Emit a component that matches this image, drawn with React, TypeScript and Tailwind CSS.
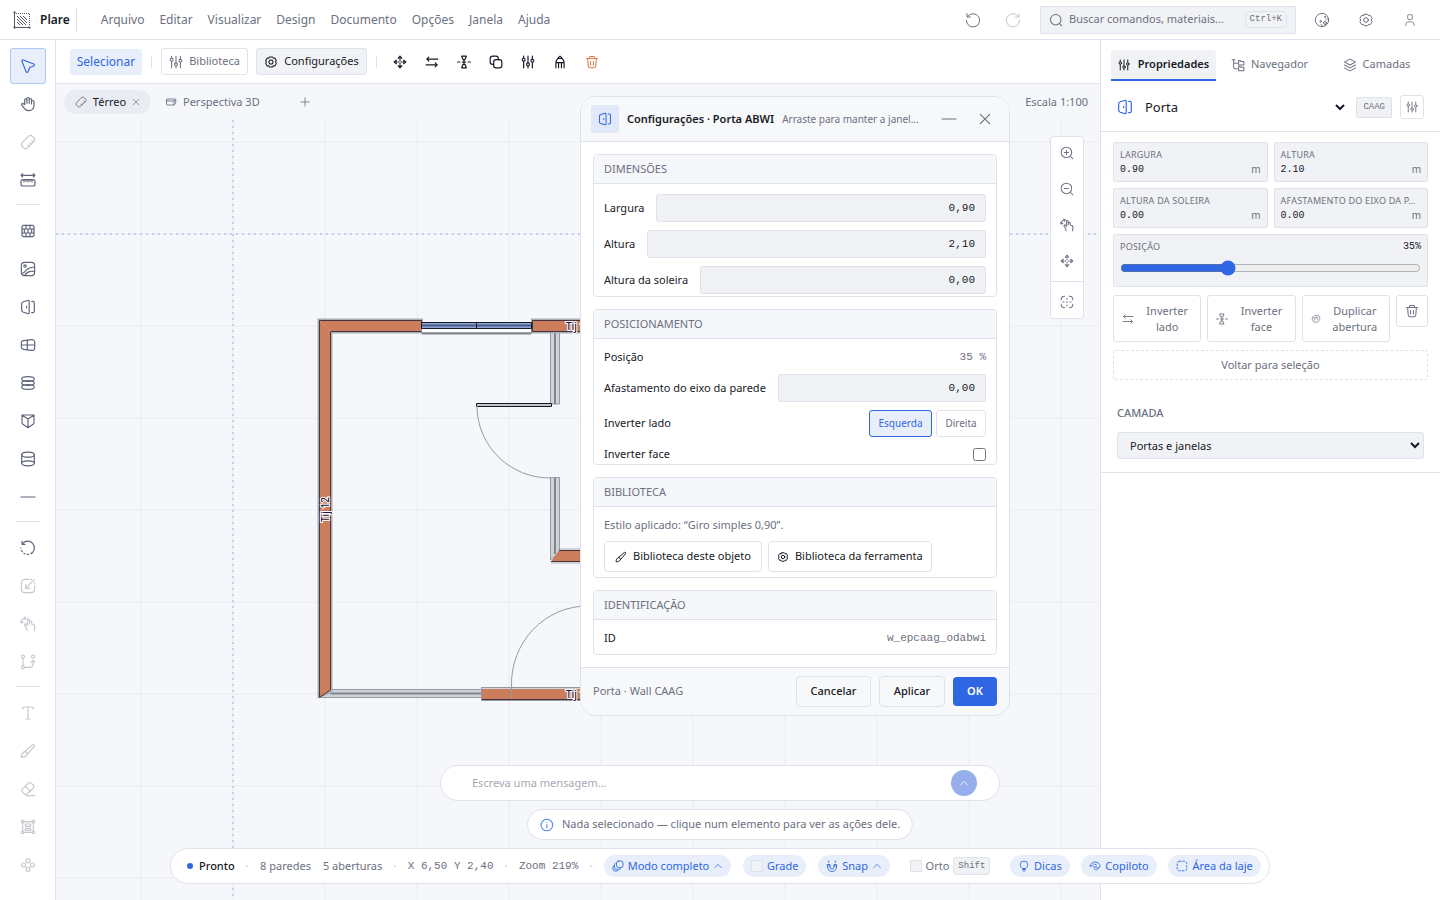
import { useState } from 'react';
import type { ReactNode } from 'react';

const ICONS: Record<string, ReactNode> = {
  cursor: <path d="M3 5c-.5-1.300.7-2.500 2-2l15.500 6c1.400.6 1.400 2.400 0 3l-6 2.200-2.500 6.300c-.6 1.400-2.500 1.300-3-.1z" />,
  hand: (
    <>
      <path d="M7 13V6a1.700 1.700 0 0 1 3.400 0v5V4a1.700 1.700 0 0 1 3.400 0v7-5.500a1.700 1.700 0 0 1 3.500 0V12 8.600a1.800 1.800 0 0 1 3.700 0V14c0 4.600-3 8-7.500 8-3.500 0-5.500-1-7.300-3.800l-3.400-4.600C1.500 12 3.600 10.400 5 11.700z" />
    </>
  ),
  ruler: (
    <>
      <path d="M13 3.200a3.800 3.800 0 0 1 5.400 0l2.400 2.400a3.800 3.800 0 0 1 0 5.400L11 20.800a3.800 3.800 0 0 1-5.400 0l-2.400-2.400a3.800 3.800 0 0 1 0-5.400z" />
      <path d="m19.500 12-2-2M16.500 15.200l-1.500-1.500M13.300 18.200l-2-2" />
    </>
  ),
  measure: (
    <>
      <path d="M1.500 5h21M4 2.500 1.500 5 4 7.500M20 2.500 22.500 5 20 7.500" />
      <rect x="1.500" y="11.500" width="21" height="9.500" rx="3" />
      <path d="M6 12v3M9 12v2M12 12v3M15 12v2M18 12v3" />
    </>
  ),
  wall: (
    <>
      <rect x="3" y="3.500" width="18" height="17" rx="2.500" />
      <path d="M3 9h18M3 15h18M9 3.500V9M15 3.500V9M6.500 9v6M12 9v6M17.500 9v6M9 15v5.500M15 15v5.500" />
    </>
  ),
  image: (
    <>
      <rect x="2" y="2" width="20" height="20" rx="5" />
      <circle cx="7.500" cy="7.500" r="1.800" />
      <path d="M3 18.500c3.500 0 4.500-3 7-5.500s6-3.500 11-4M7 21.500c2-3 5-5.500 8.500-6s4.500 0 6 .5" />
    </>
  ),
  door: (
    <>
      <path d="m5 4.200 6.500-2c1.300-.4 2.300.3 2.300 1.600v16.400c0 1.300-1 2-2.300 1.600l-6.500-2c-1.500-.5-2.500-1.200-2.500-2.800V7c0-1.600 1-2.300 2.500-2.800zM10 11v2" />
      <path d="M17.500 3.500H19c1.500 0 2.500 1 2.500 2.500v12c0 1.500-1 2.500-2.500 2.500h-1.500" />
    </>
  ),
  window: (
    <>
      <path d="M5 5.500 18 4c2-.2 4 1 4 3v10c0 2-2 3.200-4 3L5 18.500c-2-.2-3-1.200-3-3v-7c0-1.800 1-2.800 3-3zM2 12h20M11 4.800v14.400" />
    </>
  ),
  slabs: (
    <>
      <ellipse cx="12" cy="6" rx="9.500" ry="3.500" />
      <ellipse cx="12" cy="12" rx="9.500" ry="3.500" />
      <ellipse cx="12" cy="18" rx="9.500" ry="3.500" />
    </>
  ),
  roof: <path d="M3 3v11.500c0 1.200.4 1.900 1.400 2.500L12 22l7.600-5c1-.6 1.400-1.300 1.400-2.500V3zM3 3l9 6 9-6M12 9v13" />,
  cylinder: (
    <>
      <ellipse cx="12" cy="5.500" rx="9.500" ry="3.800" />
      <path d="M2.500 5.500v13M21.500 5.500v13" />
      <ellipse cx="12" cy="18.500" rx="9.500" ry="3.800" />
    </>
  ),
  minus: <path d="M1.500 12h21" />,
  rotate: (
    <>
      <path d="M3.500 6C7 .5 15 .5 19 5c4 5 3 11-1 14.500" />
      <path d="M3 2v4.500h4.500" />
      <path d="M18 19.500C12 24 2 21.500 1.500 12" strokeDasharray="2 3.500" />
    </>
  ),
  scale: (
    <>
      <path d="M13 2H8C4.200 2 2 4.200 2 8v8c0 3.800 2.200 6 6 6h8c3.800 0 6-2.200 6-6v-4" />
      <path d="M21.500 2.500 8.500 15.500M8.500 9.500v6h6M16 2h1.500M22 7v2" />
    </>
  ),
  gesture: (
    <>
      <path d="M9.500 18 7 14c-.9-1.700 1-3 2.200-1.500L11 14.500V6c0-2.200 3-2.200 3 0v6c0-2.500 0-4.500 2-4.500s1.600 2 1.600 4.500l1.400.3c2.200.4 3.500 1.700 3.200 4L21.500 22M10.500 22l-1-4" />
      <path d="M2 10c0-4 2-6 6-7M6 1.500 9 2.800 7.500 5.500M.8 7.500 2 10.500l2.800-1.500" />
    </>
  ),
  nodes: (
    <>
      <circle cx="4.500" cy="4" r="2.200" />
      <circle cx="4.500" cy="20" r="2.200" />
      <circle cx="19.500" cy="4" r="2.200" />
      <path d="M4.500 6.500v11M7 20h8c3 0 4.500-1.500 4.500-4.500V10M16.500 12.500l3-3 3 3" />
    </>
  ),
  text: <path d="M4 6.500V5c0-1.200.7-2 2-2h12c1.300 0 2 .8 2 2v1.500M12 3v18M9 21h6" />,
  brush: (
    <>
      <path d="M7 13 18.500 3c1.800-1.400 4 .8 2.500 2.500L11 17" />
      <path d="M7 13c2.500 0 4 1.500 4 4-1.500 3.500-5 4.500-9 4.500C2.300 18 4 14 7 13z" />
    </>
  ),
  eraser: (
    <>
      <path d="m12.500 3.200-9 8.900a3 3 0 0 0 0 4.200l3 3a3 3 0 0 0 4.200 0l9.300-8.800a3 3 0 0 0 0-4.200l-3-3a3 3 0 0 0-4.500-.1zM8 8l8 8M10 22h12" />
    </>
  ),
  group: (
    <>
      <circle cx="3.800" cy="4" r="2" />
      <circle cx="20.200" cy="4" r="2" />
      <circle cx="3.800" cy="20" r="2" />
      <circle cx="20.200" cy="20" r="2" />
      <path d="M6 4h12M6 20h12M4 6v12M20 6v12M8 7.500h8v3.500H8zM8 14h8v3H8z" />
    </>
  ),
  clover: (
    <>
      <circle cx="12" cy="5.500" r="3" />
      <circle cx="12" cy="18.500" r="3" />
      <circle cx="5.500" cy="12" r="3" />
      <circle cx="18.500" cy="12" r="3" />
    </>
  ),
  undo: <path d="M4 6.500A10 10 0 1 1 2 12.500M3 2.500v5h5" />,
  redo: <path d="M20 6.500A10 10 0 1 0 22 12.500M21 2.500v5h-5" />,
  search: (
    <>
      <circle cx="11.500" cy="11.500" r="9" />
      <path d="m18.500 18.500 3.500 3.500" />
    </>
  ),
  palette: (
    <>
      <circle cx="12" cy="12" r="10" />
      <circle cx="16.500" cy="7.500" r=".8" />
      <circle cx="10" cy="14" r="1.200" />
      <circle cx="16.500" cy="16.500" r="2.200" />
      <path d="M21.500 10c-2 0-3.500.5-3.500 2M12.500 22c0-2-.5-3-2-3.500" />
    </>
  ),
  gear: (
    <>
      <path d="M9.300 3.500h5.400l1.300 2 2.600-.3 2.600 4.500-1.500 2.300 1.500 2.300-2.600 4.500-2.600-.3-1.300 2H9.300l-1.300-2-2.600.3-2.600-4.500L4.300 12 2.800 9.700l2.600-4.500 2.600.3z" />
      <circle cx="12" cy="12" r="3.500" />
    </>
  ),
  user: (
    <>
      <circle cx="12" cy="7" r="4.500" />
      <path d="M5 22v-2.500C5 16.500 7.500 15 12 15s7 1.500 7 4.500V22" />
    </>
  ),
  sliders: (
    <>
      <path d="M4.500 2v3M4.500 11v11M12 2v11M12 19v3M19.500 2v5M19.500 13v9" />
      <circle cx="4.500" cy="8" r="2.500" />
      <circle cx="12" cy="16" r="2.500" />
      <circle cx="19.500" cy="10" r="2.500" />
    </>
  ),
  move: (
    <>
      <path d="m9 5.500 3-3.500 3 3.500zM9 18.500l3 3.500 3-3.500zM5.500 9 2 12l3.500 3zM18.500 9l3.500 3-3.500 3zM12 8v2M12 14v2M8 12h2M14 12h2" />
    </>
  ),
  swap: <path d="M22 7H3M6.500 3.500 3 7l3.500 3.500M2 17h19M17.500 13.500 21 17l-3.500 3.500" />,
  flip: (
    <>
      <path d="M8 2h8l-2.500 6h-3zM8 22h8l-2.500-6h-3zM1 12h4M19 12h4M9 12h6M12 9v6" />
    </>
  ),
  copy: (
    <>
      <rect x="8" y="8" width="14" height="14" rx="4" />
      <path d="M16 8V6.500C16 3.500 14.500 2 12 2H6.500C3.500 2 2 3.500 2 6.500V12c0 2.500 1.500 4 4 4h2" />
    </>
  ),
  pencilUp: <path d="M5 22v-9c0-3 4-9 7-11 3 2 7 8 7 11v9M5 13h14M9.500 13v9M14.500 13v9M9 6h6" />,
  trash: (
    <>
      <path d="M2.500 6h19M7 6l1.500-3.500h7L17 6M4.500 6l1 13c.1 1.700 1 2.700 2.700 2.700h7.600c1.700 0 2.600-1 2.700-2.700l1-13M9.500 11v6M14.500 11v6" />
    </>
  ),
  perspective: (
    <>
      <path d="M4.500 6H20c1 0 1.500.6 1.500 1.500V14L18 18H4.500C3.500 18 3 17.500 3 16.500V9zM3 10h15v8M18 10l3.500-3.500" />
    </>
  ),
  plus: <path d="M12 2v20M2 12h20" />,
  close: <path d="m4 4 16 16M20 4 4 20" />,
  tree: (
    <>
      <path d="M2 3h5M4.500 3v13c0 1.700.8 2.500 2.500 2.500h4M4.500 9H11" />
      <path d="M13 4.500h3l1 1.500h5v6h-9zM13 14.500h3l1 1.500h5v6h-9z" />
    </>
  ),
  layers: (
    <>
      <path d="M12 2 2.500 7 12 12l9.500-5zM2.500 12l9.500 5 9.500-5M2.500 17l9.500 5 9.500-5" />
    </>
  ),
  zoomIn: (
    <>
      <circle cx="11" cy="11" r="9" />
      <path d="m18 18 4 4M11 7.500v7M7.500 11h7" />
    </>
  ),
  zoomOut: (
    <>
      <circle cx="11" cy="11" r="9" />
      <path d="m18 18 4 4M7.500 11h7" />
    </>
  ),
  fit: (
    <>
      <path d="M2 8c0-4 2-6 6-6M16 2c4 0 6 2 6 6M22 16c0 4-2 6-6 6M8 22c-4 0-6-2-6-6M12 5v2M12 17v2M5 12h2M17 12h2M12 11v2" />
    </>
  ),
  duplicate: (
    <>
      <path d="M4 9c2-5 6-6.500 9-5 3-2.500 7-1 7 3 2.500 3 1 6-1 7 0 4-3 6-6 5-4 3-8 1-8-3-2.500-1.500-2.500-5-1-7z" />
      <path d="M9 15V9l6-2v6" />
    </>
  ),
  chevronUp: <path d="m4 16 8-8 8 8" />,
  info: (
    <>
      <circle cx="12" cy="12" r="10" />
      <path d="M12 11v6M12 7.200v.3" />
    </>
  ),
  stack: (
    <>
      <rect x="9" y="2" width="13" height="13" rx="4" />
      <path d="M6.500 6a4 4 0 0 0-1.500 3.500v5a4 4 0 0 0 4 4h5a4 4 0 0 0 3.500-1.500M4 11a4 4 0 0 0-2 3v4a4 4 0 0 0 4 4h4a4 4 0 0 0 3-2" />
    </>
  ),
  magnet: (
    <>
      <path d="M3 9h5v5a4 4 0 0 0 8 0V9h5v5a9 9 0 0 1-18 0zM5.500 2v3M18.500 2v3M3 12h5M16 12h5" />
    </>
  ),
  bulb: <path d="M8.500 16.500C6 15 4.500 12.500 4.500 9.500a7.500 7.500 0 0 1 15 0c0 3-1.500 5.500-4 7zM9 19h6M10.500 22h3" />,
  copilot: (
    <>
      <path d="M2 12c2-5 5-8 10-8 6 0 10 4 10 8s-3 5-5 4l-3-2M2 12c3 1 5 0 6-2M14 14c-3 1-5 0-6-2M10 17c2 4 7 4 9-1M11 8l4 2" />
    </>
  ),
  area: <rect x="2.500" y="2.500" width="19" height="19" rx="4" strokeDasharray="3.500 3.500" />,
};

function Icon({ name, className = 'size-4', weight = 1.75 }: { name: string; className?: string; weight?: number }) {
  return (
    <svg
      viewBox="0 0 24 24"
      fill="none"
      stroke="currentColor"
      strokeWidth={weight}
      strokeLinecap="round"
      strokeLinejoin="round"
      className={`shrink-0 ${className}`}
      aria-hidden="true"
    >
      {ICONS[name]}
    </svg>
  );
}

const MENUS = ['Arquivo', 'Editar', 'Visualizar', 'Design', 'Documento', 'Opções', 'Janela', 'Ajuda'];

function Header() {
  return (
    <header className="flex h-10 shrink-0 items-center border-b border-[#dfe2ea] bg-white pl-3 pr-2">
      <svg viewBox="0 0 20 20" className="size-5 text-[#555a6b]" fill="none" stroke="currentColor" aria-hidden="true">
        <path d="M2.500 2v15.500H18" />
        <path d="M4 3.500h13.500M17.500 4v12" strokeDasharray="1 1" />
        <path d="m5 6 9 9M5 9l6 6M8 6l7 7M11 6l4 4M5 12l3 3" />
        <path d="M1.500 1.500h2v2h-2zM1.500 16.500h2v2h-2zM16.500 16.500h2v2h-2z" fill="currentColor" stroke="none" />
      </svg>
      <span className="ml-2 text-[12px] font-semibold">Plare</span>
      <span className="ml-1.5 h-6 w-px bg-[#dfe2ea]" />
      <nav className="ml-6 flex gap-[15px] text-[12px] text-[#6c7080]">
        {MENUS.map((menu) => (
          <button key={menu}>{menu}</button>
        ))}
      </nav>
      <div className="ml-auto flex items-center text-[#6c7080]">
        <button aria-label="Desfazer" className="grid w-10 place-items-center">
          <Icon name="undo" weight={1.5} />
        </button>
        <button aria-label="Refazer" className="grid w-10 place-items-center opacity-40">
          <Icon name="redo" weight={1.5} />
        </button>
        <button className="ml-[7px] mr-1 flex h-7 w-64 items-center gap-1.5 border border-[#dfe2ea] bg-[#f1f2f6] px-2 text-[11px]">
          <Icon name="search" className="size-3.5" />
          <span className="whitespace-nowrap">Buscar comandos, materiais...</span>
          <kbd className="ml-auto rounded border border-[#dfe2ea] px-1 font-[Liberation_Mono,monospace] text-[9px] leading-[15px]">Ctrl+K</kbd>
        </button>
        <button aria-label="Tema" className="grid w-11 place-items-center">
          <Icon name="palette" weight={1.5} />
        </button>
        <button aria-label="Preferências" className="grid w-11 place-items-center">
          <Icon name="gear" weight={1.5} />
        </button>
        <button aria-label="Conta" className="grid w-11 place-items-center opacity-70">
          <Icon name="user" className="size-3.5" />
        </button>
      </div>
    </header>
  );
}

const TOOLS = [
  [
    { icon: 'cursor', label: 'Selecionar' },
    { icon: 'hand', label: 'Mover vista' },
    { icon: 'ruler', label: 'Régua', off: true },
    { icon: 'measure', label: 'Medir' },
  ],
  [
    { icon: 'wall', label: 'Parede' },
    { icon: 'image', label: 'Imagem' },
    { icon: 'door', label: 'Porta' },
    { icon: 'window', label: 'Janela' },
    { icon: 'slabs', label: 'Laje' },
    { icon: 'roof', label: 'Telhado' },
    { icon: 'cylinder', label: 'Pilar' },
    { icon: 'minus', label: 'Linha' },
  ],
  [
    { icon: 'rotate', label: 'Girar' },
    { icon: 'scale', label: 'Escalar', off: true },
    { icon: 'gesture', label: 'Arrastar', off: true },
    { icon: 'nodes', label: 'Editar nós', off: true },
  ],
  [
    { icon: 'text', label: 'Texto', off: true },
    { icon: 'brush', label: 'Pintar', off: true },
    { icon: 'eraser', label: 'Apagar', off: true },
    { icon: 'group', label: 'Agrupar', off: true },
    { icon: 'clover', label: 'Matriz', off: true },
  ],
];

function ToolRail() {
  return (
    <aside className="flex w-14 shrink-0 flex-col items-center gap-[6px] border-r border-[#dfe2ea] bg-white pt-2 text-[#5f6479]">
      {TOOLS.map((group, i) => (
        <div key={i} className="flex flex-col items-center gap-[2px]">
          {i > 0 && <span className="mb-1.5 h-px w-6 bg-[#dfe2ea]" />}
          {group.map((tool) => (
            <button
              key={tool.icon}
              aria-label={tool.label}
              className={
                tool.icon === 'cursor'
                  ? 'grid size-9 place-items-center rounded-[3px] border border-[#adc8f6] bg-[#e8effb] text-[#2f66e4]'
                  : tool.off
                    ? 'grid size-9 place-items-center opacity-35'
                    : 'grid size-9 place-items-center'
              }
            >
              <Icon name={tool.icon} />
            </button>
          ))}
        </div>
      ))}
    </aside>
  );
}

const ACTIONS = [
  { icon: 'move', label: 'Mover' },
  { icon: 'swap', label: 'Inverter lado' },
  { icon: 'flip', label: 'Inverter face' },
  { icon: 'copy', label: 'Duplicar' },
  { icon: 'sliders', label: 'Ajustar' },
  { icon: 'pencilUp', label: 'Editar' },
];

function Toolbar() {
  return (
    <div className="flex h-11 shrink-0 items-center gap-2 border-b border-[#dfe2ea] bg-white px-3.5 text-[11px]">
      <button className="h-[26px] w-[72px] rounded-[3px] bg-[#e8effb] text-[12px] text-[#2f66e4]">Selecionar</button>
      <span className="mx-px h-3 w-px bg-[#dfe2ea]" />
      <button className="flex h-[27px] w-[87px] items-center justify-center gap-1.5 rounded-[3px] border border-[#dfe2ea] text-[#6c7080]">
        <Icon name="sliders" className="size-3.5" />
        Biblioteca
      </button>
      <button className="flex h-[27px] w-[111px] items-center justify-center gap-1.5 rounded-[3px] border border-[#dfe2ea] bg-[#f1f2f6]">
        <Icon name="gear" className="size-3.5" />
        Configurações
      </button>
      <span className="mx-px h-3 w-px bg-[#dfe2ea]" />
      <div className="flex gap-1">
        {ACTIONS.map((action) => (
          <button key={action.icon} aria-label={action.label} className="grid size-7 place-items-center">
            <Icon name={action.icon} className="size-3.5" weight={2} />
          </button>
        ))}
        <button aria-label="Excluir" className="grid size-7 place-items-center text-[#dc7a45]">
          <Icon name="trash" className="size-3.5" />
        </button>
      </div>
    </div>
  );
}

function ViewTabs() {
  return (
    <div className="flex h-9 shrink-0 items-center px-2 text-[11px] text-[#6c7080]">
      <div className="flex h-6 w-[87px] items-center justify-center gap-1.5 rounded-full bg-[#e9ecf2]">
        <Icon name="ruler" className="size-3" />
        <button className="text-[#171a26]">Térreo</button>
        <button aria-label="Fechar aba">
          <Icon name="close" className="size-2" weight={2} />
        </button>
      </div>
      <button className="ml-3.5 flex items-center gap-1.5">
        <Icon name="perspective" className="size-3" />
        Perspectiva 3D
      </button>
      <button aria-label="Nova vista" className="ml-10">
        <Icon name="plus" className="size-2.5" weight={2} />
      </button>
      <span className="ml-auto mr-1">Escala 1:100</span>
    </div>
  );
}

// Floor plan, in canvas pixels
function FloorPlan() {
  const brick = '#cc7d5c';
  return (
    <svg className="h-full w-full" fill="none" aria-label="Planta do térreo">
      <defs>
        <pattern id="grid" x="84" y="21" width="92" height="92" patternUnits="userSpaceOnUse">
          <path d="M0 1h92M1 0v92" stroke="#eff1f5" strokeWidth="2" />
          <path d="M0 46.500h92M46.500 0v92" stroke="#f3f5f9" />
        </pattern>
      </defs>
      <rect width="100%" height="100%" fill="url(#grid)" />
      <path d="M0 114h3000M177 0v3000" stroke="#c3cff1" strokeWidth="2" strokeDasharray="2 4" />

      <g stroke="#9599a5">
        <path d="M274 569.500h152v8H264z" fill="#cfd3d8" />
        <path d="M494.500 212h9v72h-9zM494.500 357.500h9V432l-9 8z" fill="#cfd3d8" />
        <path d="M274 573.500h152M499 212v72M499 358v76" stroke="#81858e" strokeWidth="2" />
      </g>
      <path d="M262.500 577V199.500H366V212.500H275.500V572zM476 199.500h120v13H476z" stroke="#a9adb8" strokeWidth="2" />
      <path d="M263.500 577.500V200.500H365.500V211.500H274.500V570z" fill={brick} stroke="#45343c" />
      <path d="M476.500 200.500H600v11H476.500z" fill={brick} stroke="#45343c" />
      <path d="m264 201 11 11" stroke="#e0a68f" strokeDasharray="1 1" />
      <path d="M503 430.500h97v11H495z" fill={brick} />
      <path d="M503 430.500h97M495 441.500h105" stroke="#45343c" />
      <path d="M502 429h98M495 443h105" stroke="#a9adb8" />
      <path d="M425.500 567.500H600v13H425.500z" fill="#cfd3d8" stroke="#9599a5" />
      <path d="M426 569h174v10H426z" fill={brick} />
      <path d="M426 579.500h174" stroke="#45343c" />

      <path d="M365.500 203h110v10h-110z" fill="#fff" stroke="#81858e" />
      <path d="M365.500 202.500h110v6h-110z" fill="#8ba3d8" stroke="#171a26" />
      <path d="M366 205.500h109" stroke="#505d85" strokeWidth="2" />
      <path d="M420.500 202.500v6" stroke="#171a26" />
      <path d="M366 213.500h109" stroke="#81858e" strokeWidth="2" />

      <path d="M420.500 283.500h75v3h-75z" fill="#c3c6ce" stroke="#171a26" />
      <path d="M421 286a73 72 0 0 0 74 72M455.500 578v-12a76 78 0 0 1 76-80" stroke="#959aa8" />

      <g fontSize="10" fontWeight="500" fill="#1c1038" stroke="#fff" strokeWidth="2" paintOrder="stroke" fontFamily="Noto Sans, sans-serif">
        <text x="510" y="210">Tij 12</text>
        <text x="510" y="578">Tij 12</text>
        <text transform="translate(273 402) rotate(-90)">Tij 12</text>
      </g>
    </svg>
  );
}

function ZoomBar() {
  return (
    <div className="absolute right-4 top-4 flex w-[34px] flex-col items-center gap-1 rounded border border-[#dfe2ea] bg-white text-[#6c7080]">
      {['zoomIn', 'zoomOut', 'gesture', 'move'].map((name) => (
        <button key={name} aria-label={name} className="grid size-8 place-items-center">
          <Icon name={name} className="size-3.5" />
        </button>
      ))}
      <button aria-label="Enquadrar" className="grid h-[37px] w-8 place-items-center border-t border-[#dfe2ea] pt-1">
        <Icon name="fit" className="size-3.5" />
      </button>
    </div>
  );
}

function Section({ title, className, children }: { title: string; className: string; children: ReactNode }) {
  return (
    <section className="overflow-hidden rounded border border-[#dfe2ea] bg-white">
      <h3 className="flex h-[29px] items-center border-b border-[#dfe2ea] bg-[#f6f7fa] px-2.5 text-[11px] text-[#6c7080]">{title}</h3>
      <div className={`flex flex-col gap-2 px-2.5 pt-2.5 ${className}`}>{children}</div>
    </section>
  );
}

function NumberRow({ label, value }: { label: string; value: string }) {
  return (
    <label className="flex h-7 items-center gap-3">
      <span className="shrink-0">{label}</span>
      <input
        defaultValue={value}
        className="h-7 w-full min-w-0 rounded-[3px] border border-[#dfe2ea] bg-[#f1f2f6] px-2.5 text-right font-[Liberation_Mono,monospace] text-[11px]"
      />
    </label>
  );
}

function SettingsDialog() {
  return (
    <div
      role="dialog"
      aria-label="Configurações"
      className="absolute left-[580px] top-24 w-[430px] overflow-hidden rounded-2xl border border-[#dfe2ea] bg-white text-[11px]"
    >
      <div className="flex h-[45px] items-center border-b border-[#dfe2ea] bg-[#f7f8fa] pl-2.5 pr-1.5">
        <span className="grid size-7 shrink-0 place-items-center rounded-[3px] bg-[#e0e8f9] text-[#2f66e4]">
          <Icon name="door" className="size-3.5" />
        </span>
        <h2 className="ml-2 shrink-0 font-semibold">Configurações · Porta ABWI</h2>
        <p className="ml-2 min-w-0 flex-1 truncate text-[10px] text-[#6c7080]">Arraste para manter a janel...</p>
        <button aria-label="Minimizar" className="grid size-9 place-items-center text-[#6c7080]">
          <Icon name="minus" />
        </button>
        <button aria-label="Fechar" className="grid size-9 place-items-center text-[#6c7080]">
          <Icon name="close" className="size-3.5" weight={2} />
        </button>
      </div>

      <div className="flex flex-col gap-3 p-3">
        <Section title="DIMENSÕES" className="pb-0.5">
          <NumberRow label="Largura" value="0,90" />
          <NumberRow label="Altura" value="2,10" />
          <NumberRow label="Altura da soleira" value="0,00" />
        </Section>
        <Section title="POSICIONAMENTO" className="pb-px">
          <div className="flex h-[17px] items-center justify-between">
            <span>Posição</span>
            <span className="font-[Liberation_Mono,monospace] text-[#6c7080]">35 %</span>
          </div>
          <NumberRow label="Afastamento do eixo da parede" value="0,00" />
          <div className="flex h-[27px] items-center gap-1">
            <span className="mr-auto">Inverter lado</span>
            <button className="h-full w-[63px] rounded-[3px] border border-[#2f66e4] bg-[#e8effb] text-[10px] text-[#2f66e4]">Esquerda</button>
            <button className="h-full w-[50px] rounded-[3px] border border-[#dfe2ea] text-[10px] text-[#6c7080]">Direita</button>
          </div>
          <label className="flex h-[18px] items-center justify-between">
            Inverter face
            <input type="checkbox" className="size-[13px]" />
          </label>
        </Section>
        <Section title="BIBLIOTECA" className="pb-[5px]">
          <p className="leading-4 text-[#6c7080]">Estilo aplicado: “Giro simples 0,90”.</p>
          <div className="flex gap-1.5">
            <button className="flex h-[31px] items-center gap-1.5 rounded border border-[#dfe2ea] px-2.5">
              <Icon name="brush" className="size-3" weight={2} />
              Biblioteca deste objeto
            </button>
            <button className="flex h-[31px] items-center gap-1.5 rounded border border-[#dfe2ea] px-2">
              <Icon name="gear" className="size-3" weight={2} />
              Biblioteca da ferramenta
            </button>
          </div>
        </Section>
        <Section title="IDENTIFICAÇÃO" className="pb-2">
          <div className="flex h-4 items-center justify-between">
            <span>ID</span>
            <span className="font-[Liberation_Mono,monospace] text-[#6c7080]">w_epcaag_odabwi</span>
          </div>
        </Section>
      </div>

      <div className="flex h-12 items-center gap-2 border-t border-[#dfe2ea] bg-[#f7f8fa] px-3">
        <span className="mr-auto text-[#6c7080]">Porta · Wall CAAG</span>
        <button className="h-[31px] w-[75px] rounded border border-[#dfe2ea] font-medium">Cancelar</button>
        <button className="h-[31px] w-[66px] rounded border border-[#dfe2ea] font-medium">Aplicar</button>
        <button className="h-[29px] w-11 rounded bg-[#2f66e4] font-semibold text-white">OK</button>
      </div>
    </div>
  );
}

function Field({ label, value }: { label: string; value: string }) {
  return (
    <label className="flex h-10 min-w-0 flex-col justify-center rounded-xs border border-[#dfe2ea] bg-[#f1f2f6] px-1.5">
      <span className="whitespace-nowrap text-[9px] leading-[15px] tracking-wide text-[#6c7080]">{label}</span>
      <span className="flex h-[15px] items-center justify-between">
        <input defaultValue={value} className="w-20 bg-transparent font-[Liberation_Mono,monospace] text-[10px]" />
        <span className="text-[10px] text-[#6c7080]">m</span>
      </span>
    </label>
  );
}

function PropertiesPanel() {
  const [position, setPosition] = useState(35);

  return (
    <aside className="flex w-[340px] shrink-0 flex-col border-l border-[#dfe2ea] bg-white">
      <div className="flex px-2.5 pt-2.5 text-[11px] text-[#6c7080]">
        <button className="flex h-[31px] w-[105px] items-center justify-center gap-2 rounded-t border-b-2 border-[#2f66e4] bg-[#f1f2f6] font-semibold text-[#171a26]">
          <Icon name="sliders" className="size-3" weight={2} />
          Propriedades
        </button>
        <button className="flex h-[29px] flex-1 items-center justify-center gap-1.5">
          <Icon name="tree" className="size-3.5" />
          Navegador
        </button>
        <button className="flex h-[29px] flex-1 items-center justify-center gap-1.5">
          <Icon name="layers" className="size-3.5" />
          Camadas
        </button>
      </div>

      <div className="flex h-[51px] items-center gap-2 border-b border-[#dfe2ea] px-4 pt-0.5">
        <span className="text-[#2f66e4]">
          <Icon name="door" />
        </span>
        <select aria-label="Elemento" className="min-w-0 flex-1 bg-white text-[13px]">
          <option>Porta</option>
        </select>
        <span className="rounded-xs border border-[#dfe2ea] bg-[#f1f2f6] px-1.5 font-[Liberation_Mono,monospace] text-[9px] leading-[19px] text-[#6c7080]">CAAG</span>
        <button aria-label="Ajustes" className="grid size-6 place-items-center rounded-[3px] border border-[#dfe2ea] text-[#6c7080]">
          <Icon name="sliders" className="size-3" />
        </button>
      </div>

      <div className="flex flex-col gap-2 px-3 pt-2.5">
        <div className="grid grid-cols-2 gap-1.5">
          <Field label="LARGURA" value="0.90" />
          <Field label="ALTURA" value="2.10" />
          <Field label="ALTURA DA SOLEIRA" value="0.00" />
          <Field label="AFASTAMENTO DO EIXO DA P…" value="0.00" />
          <label className="col-span-2 flex h-[53px] flex-col rounded-xs border border-[#dfe2ea] bg-[#f1f2f6] px-1.5 pt-1">
            <span className="flex justify-between text-[9px] leading-4 tracking-wide text-[#6c7080]">
              POSIÇÃO
              <output className="font-[Liberation_Mono,monospace] text-[10px] tracking-normal text-[#171a26]">{position}%</output>
            </span>
            <input
              type="range"
              value={position}
              onChange={(e) => setPosition(Number(e.target.value))}
              className="mt-[5px] h-4 w-full accent-[#2f66e4]"
            />
          </label>
        </div>
        <div className="flex items-start gap-1.5 text-[11px] leading-4 text-[#6c7080]">
          <button className="flex h-[47px] flex-1 items-center gap-2 rounded-[3px] border border-[#dfe2ea] px-2">
            <Icon name="swap" className="size-3" />
            <span className="flex-1">Inverter lado</span>
          </button>
          <button className="flex h-[47px] flex-1 items-center gap-2 rounded-[3px] border border-[#dfe2ea] px-2">
            <Icon name="flip" className="size-3" />
            <span className="flex-1">Inverter face</span>
          </button>
          <button className="flex h-[47px] flex-1 items-center gap-2 rounded-[3px] border border-[#dfe2ea] px-2">
            <Icon name="duplicate" className="size-2.5" />
            <span className="flex-1">Duplicar abertura</span>
          </button>
          <button aria-label="Excluir" className="grid size-8 place-items-center rounded-[3px] border border-[#dfe2ea]">
            <Icon name="trash" className="size-3.5" />
          </button>
        </div>
        <button className="h-[30px] rounded-[3px] border border-dashed border-[#dfe2ea] text-[11px] text-[#6c7080]">Voltar para seleção</button>
      </div>

      <div className="mt-6 flex flex-col gap-2.5 border-b border-[#dfe2ea] px-4 pb-[13px]">
        <label htmlFor="layer" className="text-[11px] font-medium leading-[18px] text-[#6c7080]">
          CAMADA
        </label>
        <select id="layer" className="h-[27px] rounded-[3px] border border-[#dfe2ea] bg-[#f1f2f6] px-2 text-[11px]">
          <option>Portas e janelas</option>
        </select>
      </div>
    </aside>
  );
}

function Dot() {
  return <span className="size-0.5 rounded-full bg-[#d3d6de]" />;
}

function StatusBar() {
  const pill = 'flex h-[22px] items-center gap-1 rounded-full bg-[#e8effb] px-2 text-[#2f66e4]';
  return (
    <footer className="absolute bottom-4 left-1/2 flex h-9 w-[1100px] -translate-x-1/2 items-center justify-between rounded-full border border-[#dfe2ea] bg-white pl-4 pr-2 text-[11px] text-[#6c7080]">
      <span className="flex items-center gap-1.5 font-medium text-[#171a26]">
        <span className="size-1.5 rounded-full bg-[#2f66e4]" />
        Pronto
      </span>
      <Dot />
      <span className="flex gap-3">
        <span>8 paredes</span>
        <span>5 aberturas</span>
      </span>
      <Dot />
      <span className="font-[Liberation_Mono,monospace]">X 6,50 Y 2,40</span>
      <Dot />
      <span className="font-[Liberation_Mono,monospace]">Zoom 219%</span>
      <Dot />
      <button className={pill}>
        <Icon name="stack" className="size-3" />
        Modo completo
        <Icon name="chevronUp" className="size-2.5" />
      </button>
      <label className={pill}>
        <input type="checkbox" className="size-3 appearance-none border border-[#dfe2ea] bg-[#f1f2f6]" />
        Grade
      </label>
      <button className={pill}>
        <Icon name="magnet" className="size-3" />
        Snap
        <Icon name="chevronUp" className="size-2.5" />
      </button>
      <label className="flex items-center gap-1 px-2">
        <input type="checkbox" className="size-3 appearance-none border border-[#dfe2ea] bg-[#f1f2f6]" />
        Orto
        <kbd className="rounded-[3px] border border-[#dfe2ea] bg-[#f1f2f6] px-1 font-[Liberation_Mono,monospace] text-[9px] leading-4">Shift</kbd>
      </label>
      <button className={pill}>
        <Icon name="bulb" className="size-3" />
        Dicas
      </button>
      <button className={pill}>
        <Icon name="copilot" className="size-3" />
        Copiloto
      </button>
      <button className={pill}>
        <Icon name="area" className="size-3" />
        Área da laje
      </button>
    </footer>
  );
}

export default function App() {
  return (
    <div className="relative flex h-screen flex-col overflow-hidden bg-white font-[Noto_Sans,sans-serif] text-[#171a26]">
      <Header />
      <div className="flex min-h-0 flex-1">
        <ToolRail />
        <main className="flex min-w-0 flex-1 flex-col bg-[#f5f7fb]">
          <Toolbar />
          <ViewTabs />
          <div className="relative min-h-0 flex-1">
            <FloorPlan />
            <ZoomBar />
          </div>
        </main>
        <PropertiesPanel />
      </div>

      <SettingsDialog />
      <form className="absolute bottom-[99px] left-1/2 flex h-9 w-[560px] -translate-x-1/2 items-center rounded-full border border-[#dfe2ea] bg-white pl-[31px] pr-[22px]">
        <input aria-label="Mensagem" placeholder="Escreva uma mensagem..." className="flex-1 text-[11px] outline-none placeholder:text-[#a5a8b3]" />
        <button type="button" aria-label="Enviar" className="grid size-[26px] place-items-center rounded-full bg-[#97aeec] text-white">
          <Icon name="chevronUp" className="size-2.5" weight={2} />
        </button>
      </form>
      <div className="absolute bottom-[60px] left-1/2 flex h-[31px] -translate-x-1/2 items-center gap-2 whitespace-nowrap rounded-full border border-[#dfe2ea] bg-white px-3 text-[11px] text-[#6c7080]">
        <span className="text-[#5484ea]">
          <Icon name="info" className="size-3.5" />
        </span>
        Nada selecionado — clique num elemento para ver as ações dele.
      </div>
      <StatusBar />
    </div>
  );
}
